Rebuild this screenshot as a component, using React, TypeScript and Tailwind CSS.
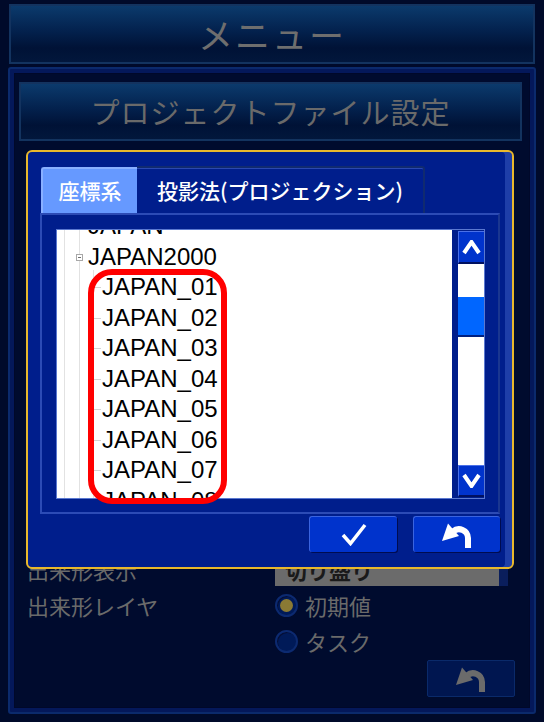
import React from 'react';

// tree rows shown in the projection list
const ROWS: { label: string; depth: 0 | 1; toggle?: boolean }[] = [
  { label: 'JAPAN', depth: 0 },
  { label: 'JAPAN2000', depth: 0, toggle: true },
  { label: 'JAPAN_01', depth: 1 },
  { label: 'JAPAN_02', depth: 1 },
  { label: 'JAPAN_03', depth: 1 },
  { label: 'JAPAN_04', depth: 1 },
  { label: 'JAPAN_05', depth: 1 },
  { label: 'JAPAN_06', depth: 1 },
  { label: 'JAPAN_07', depth: 1 },
  { label: 'JAPAN_08', depth: 1 },
];

function CheckIcon() {
  return (
    <svg width="26" height="23" viewBox="0 0 26 23" fill="none">
      <path d="M2 12 L9.5 20.5 L24 2" stroke="white" strokeWidth="3.5" strokeLinejoin="miter" />
    </svg>
  );
}

function UndoIcon({ color = 'white' }: { color?: string }) {
  return (
    <svg width="34" height="26" viewBox="0 0 34 26" fill="none">
      <path d="M28 26 V16 A9 9 0 0 0 13 9.5" stroke={color} strokeWidth="6" />
      <polygon points="8,1.5 19,14 2,19" fill={color} />
    </svg>
  );
}

function Chevron({ down = false }: { down?: boolean }) {
  return (
    <svg width="19" height="15" viewBox="0 0 19 15" fill="none">
      <path
        d={down ? 'M2 2 L9.5 13 L17 2' : 'M2 13 L9.5 2 L17 13'}
        stroke="white"
        strokeWidth="4"
      />
    </svg>
  );
}

function ProjectionDialog() {
  return (
    <div className="absolute left-[26px] top-[150px] w-[488px] h-[419px] rounded-[6px] border-2 border-[#e9b82c] bg-[#001e8c] shadow-[inset_-7px_0_0_#1e3ea8] flex flex-col pl-[12px] pt-[14px] pr-[12px]">
      {/* tabs */}
      <div className="flex items-end pl-[1px]">
        <div className="w-[96px] h-[46px] rounded-tl-[3px] bg-[#6699ff] border-t-2 border-l-2 border-[#8ab0ff] flex items-center justify-center text-white text-[21px] font-medium">
          座標系
        </div>
        <div className="w-[288px] h-[47px] rounded-tr-[3px] bg-[#001e8c] border-t-2 border-r-2 border-[#102a70] shadow-[inset_0_1px_0_#2a48b0] flex items-center justify-center text-white text-[21px] font-medium">
          投影法(プロジェクション)
        </div>
      </div>

      {/* tab content */}
      <div className="w-[460px] h-[301px] border-2 border-[#2c4bb5] border-r-[#1a3690] bg-[#001e8c] pl-[14px] pt-[14px]">
        <div className="flex h-[270px] w-[429px] border border-[#5a78d0]">
          <div className="relative w-[395px] h-full bg-white overflow-hidden font-['Liberation_Sans',Arial,sans-serif] text-black text-[24px]">
            {/* tree guide lines */}
            <div className="absolute left-[7px] top-0 bottom-0 w-px bg-[#e2e2e2]" />
            <div className="absolute left-[22px] top-0 bottom-0 w-px bg-[#e2e2e2]" />
            <div className="absolute left-[36px] top-[40px] bottom-0 w-px bg-[#e2e2e2]" />
            <div className="-mt-[19px]">
              {ROWS.map((r) => (
                <div key={r.label} className="relative h-[30.5px] flex items-center">
                  {r.toggle && (
                    <span className="absolute left-[19px] top-[12px] w-[7px] h-[7px] border border-[#a8a8a8] bg-white flex items-center justify-center">
                      <span className="w-[3px] h-px bg-[#707070]" />
                    </span>
                  )}
                  {r.depth === 1 && <span className="absolute left-[36px] top-[15px] w-[8px] h-px bg-[#d4d4d4]" />}
                  <span className={r.depth === 0 ? 'pl-[31px] leading-none' : 'pl-[45px] leading-none'}>{r.label}</span>
                </div>
              ))}
            </div>
          </div>
          <div className="ml-[6px] w-[26px] h-full flex flex-col py-px">
            <div className="h-[33px] bg-[#0033cc] border-t border-l border-[#4a70e8] border-b-2 border-b-[#001060] flex items-center justify-center">
              <Chevron />
            </div>
            <div className="h-[33px] bg-white" />
            <div className="h-[40px] bg-[#0066ff] border-b-2 border-[#002080]" />
            <div className="flex-1 bg-white" />
            <div className="h-[32px] bg-[#0033cc] border-t border-l border-[#4a70e8] border-b-2 border-b-[#001060] flex items-center justify-center">
              <Chevron down />
            </div>
          </div>
        </div>
      </div>

      {/* dialog buttons */}
      <div className="flex justify-end gap-[16px] mt-[2px] w-[460px]">
        <button className="w-[88px] h-[36px] rounded-[3px] bg-[#0033cc] border-t border-l border-[#3a64e0] shadow-[1px_1px_0_#000c50] flex items-center justify-center">
          <CheckIcon />
        </button>
        <button className="w-[87px] h-[36px] rounded-[3px] bg-[#0033cc] border-t border-l border-[#3a64e0] shadow-[1px_1px_0_#000c50] flex items-center justify-center">
          <UndoIcon />
        </button>
      </div>
    </div>
  );
}

function Radio({ on, label }: { on: boolean; label: string }) {
  return (
    <div className="flex items-center gap-[7px]">
      <span className="w-[23px] h-[23px] rounded-full bg-[#001a58] border-2 border-[#0c2a70] shadow-[inset_1px_1px_0_#050f35] flex items-center justify-center">
        {on && <span className="w-[13px] h-[13px] rounded-full bg-[#8a7a34]" />}
      </span>
      <span>{label}</span>
    </div>
  );
}

export default function App() {
  return (
    <div className="relative w-[544px] h-[722px] overflow-hidden bg-[#000a2a] pt-[4px] px-[8px] font-['Noto_Sans_CJK_JP','Liberation_Sans',sans-serif]">
      {/* title */}
      <div className="mx-[1px] h-[60px] border-2 border-[#13335f] bg-[linear-gradient(to_bottom,#0b3a6c,#03214d_45%,#001236_75%,#02173c)] flex items-center justify-center text-[#6e6e6e] text-[35px] tracking-[2px]">
        メニュー
      </div>

      {/* main panel */}
      <div className="mt-[3px] h-[647px] rounded-[3px] border-2 border-[#0b2a6c] bg-[#04185a] p-[4px] flex flex-col">
        <div className="flex-1 border border-[#00082a] bg-[#000b2e] pt-[8px] pl-[4px] pr-[7px] flex flex-col">
          <div className="h-[59px] border-2 border-[#13335f] bg-[linear-gradient(to_bottom,#0b3a6c,#03214d_45%,#001236_75%,#02173c)] flex items-center justify-center text-[#6a6a6a] text-[29px] tracking-[1px]">
            プロジェクトファイル設定
          </div>

          <div className="mt-[411px] pl-[8px] flex flex-col text-[22px] text-[#6a6a6a]">
            <div className="h-[34px] flex items-center">
              <span className="w-[248px]">出来形表示</span>
              <div className="flex h-[34px]">
                <div className="w-[224px] bg-[#6b6b6b] text-[#1a1a1a] font-bold pl-[10px] flex items-center">切り盛り</div>
                <div className="w-[9px] bg-[#0a1e5c]" />
              </div>
            </div>
            <div className="mt-px h-[36px] flex items-center">
              <span className="w-[248px]">出来形レイヤ</span>
              <Radio on label="初期値" />
            </div>
            <div className="h-[36px] flex items-center pl-[248px]">
              <Radio on={false} label="タスク" />
            </div>
          </div>

          <div className="mt-px flex justify-end mr-[7px]">
            <button className="w-[88px] h-[37px] rounded-[2px] bg-[#001650] border border-[#0a2a6a] flex items-center justify-center">
              <UndoIcon color="#6b6b6b" />
            </button>
          </div>
        </div>
      </div>

      <ProjectionDialog />

      {/* highlight annotation */}
      <div className="absolute left-[88px] top-[269px] w-[139px] h-[235px] rounded-[24px] border-[6px] border-[#ff0000]" />
    </div>
  );
}
